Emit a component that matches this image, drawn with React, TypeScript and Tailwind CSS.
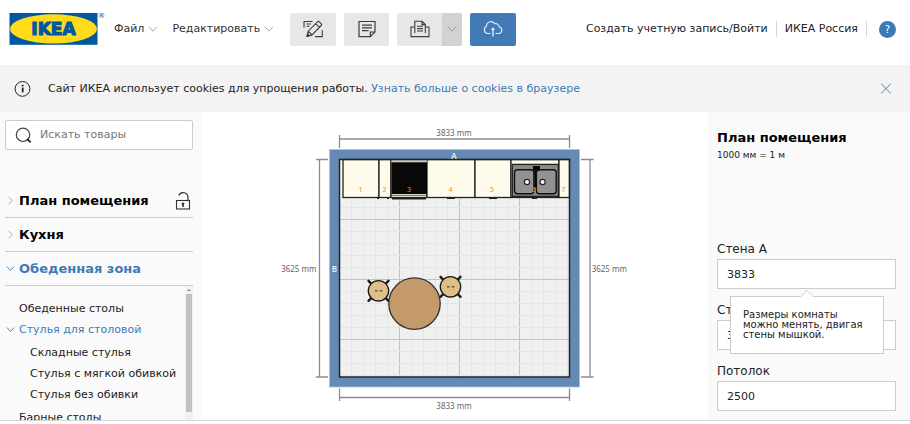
import React from 'react';

const mainMenu = ['Файл', 'Редактировать'];

const cabinets = [
  { id: 1, x: 343, width: 36, label: 360.5 },
  { id: 2, x: 379, width: 12, label: 384.5 },
  { id: 3, x: 391, width: 36, label: 409 },
  { id: 4, x: 427, width: 48, label: 450.5 },
  { id: 5, x: 475, width: 36, label: 492 },
  { id: 6, x: 511, width: 48, label: 534 },
  { id: 7, x: 559, width: 10.5, label: 563.5 },
];

const chairs = [
  { x: 378.5, y: 290.8 },
  { x: 450.5, y: 286.8 },
];

const gridX = Array.from({ length: 19 }, (_, i) => 351.5 + i * 12);
const gridY = Array.from({ length: 15 }, (_, i) => 207.5 + i * 12);

function Chevron({ className }: { className: string }) {
  return (
    <svg viewBox="0 0 10 10" className={className} fill="none" stroke="currentColor" aria-hidden="true">
      <path d="M1 2.8 L5 7.2 L9 2.8" />
    </svg>
  );
}

function Logo() {
  return (
    <svg viewBox="0 0 98 36" className="w-[98px] h-9" role="img" aria-label="IKEA">
      <rect x="0.5" y="2" width="88" height="31.8" fill="#0058a3" />
      <ellipse cx="44.5" cy="17.9" rx="43.5" ry="14.6" fill="#ffdb1c" />
      <text
        x="44.5"
        y="23.8"
        textAnchor="middle"
        fontFamily="DejaVu Sans"
        fontWeight="700"
        fontSize="17"
        fill="#0058a3"
        stroke="#0058a3"
        strokeWidth="1.2"
      >
        IKEA
      </text>
      <text x="89" y="6.5" fontFamily="DejaVu Sans" fontSize="7" fill="#0058a3">
        ®
      </text>
    </svg>
  );
}

function Header() {
  return (
    <header className="flex items-center h-[66px] pb-[7px] pl-[9px] pr-[14px] shrink-0 bg-white border-b border-[#f3f3f3]">
      <a href="#home" className="shrink-0">
        <Logo />
      </a>
      <nav className="flex items-center gap-[14px] ml-[7px]">
        {mainMenu.map((item) => (
          <button key={item} className="flex items-center gap-1 text-[11px] text-[#333]">
            {item}
            <Chevron className="w-[10px] h-[10px] text-[#aaa]" />
          </button>
        ))}
      </nav>
      <div className="flex items-center gap-2 ml-4">
        <button aria-label="Новый план" className="flex items-center justify-center w-[46px] h-[33px] rounded-xs bg-[#e7e7e7]">
          <svg viewBox="0 0 20 18" className="w-5 h-[18px]" fill="none" stroke="#3c3c3c" strokeWidth="1.1">
            <path d="M1 7.5 V1.5 H9.5 M3.5 4 H8 M3.5 6.2 H6.5" />
            <path d="M4 16.3 L5.2 11.2 L14.5 1.8 Q15.4 1 16.3 1.9 L18.3 3.9 Q19 4.7 18.2 5.5 L9 15 Z M5.2 11.2 L9 15 M12.6 3.6 L16.4 7.4" />
            <path d="M4 16.3 L4.6 13.8 L6.5 15.7 Z" fill="#3c3c3c" />
            <path d="M19.3 10 V16.6 H12" />
          </svg>
        </button>
        <button aria-label="Заметка" className="flex items-center justify-center w-[45px] h-[33px] rounded-xs bg-[#e7e7e7]">
          <svg viewBox="0 0 18 18" className="w-[18px] h-[18px]" fill="none" stroke="#3c3c3c" strokeWidth="1.2">
            <path d="M1 1.5 H17 V12 L12.3 16.6 H1 Z M17 12 H12.3 V16.6" />
            <path d="M4 5.2 H14 M4 7.9 H14 M4 10.6 H10.5" />
          </svg>
        </button>
        <div className="flex h-[33px] rounded-xs overflow-hidden bg-[#e7e7e7]">
          <button aria-label="Печать" className="flex items-center justify-center w-[45px]">
            <svg viewBox="0 0 20 18" className="w-5 h-[18px]" fill="none" stroke="#3c3c3c" strokeWidth="1.1">
              <path d="M4.5 7 H1 V16.6 H19 V7 H15.5" />
              <path d="M4.8 13.2 V1.3 H12 L15.3 4.6 V13.2" />
              <path d="M12 1.3 V4.6 H15.3 M7 6.2 H13 M7 8.6 H13 M7 11 H13" />
            </svg>
          </button>
          <button aria-label="Варианты печати" className="flex items-center justify-center w-5 bg-[#d2d2d2]">
            <Chevron className="w-[10px] h-[10px] text-[#999]" />
          </button>
        </div>
        <button aria-label="Сохранить" className="flex items-center justify-center w-[46px] h-[33px] rounded-xs bg-[#417ab4]">
          <svg viewBox="0 0 20 18" className="w-5 h-[18px]" fill="none" stroke="#e3ecf5" strokeWidth="1.1">
            <path d="M7.5 13.5 H4.8 A3.7 3.7 0 0 1 3.4 6.5 A4.6 4.6 0 0 1 11.8 3.7 A3.6 3.6 0 0 1 16.2 7 A3.3 3.3 0 0 1 15.8 13.5 H12.5" />
            <path d="M10 16.5 V8" strokeWidth="1.4" />
            <path d="M7.8 10 L10 7.2 L12.2 10 Z" fill="#e3ecf5" stroke="none" />
          </svg>
        </button>
      </div>
      <div className="flex items-center ml-auto text-[11px] text-[#222] whitespace-nowrap">
        <a href="#login" className="pr-2">
          Создать учетную запись/Войти
        </a>
        <a href="#russia" className="px-2 border-x border-[#d8d8d8]">
          ИКЕА Россия
        </a>
        <button
          aria-label="Помощь"
          className="flex items-center justify-center w-[17px] h-[17px] ml-3 rounded-full bg-[#3d79b5] text-white text-[10px]"
        >
          ?
        </button>
      </div>
    </header>
  );
}

function CookieBar() {
  return (
    <div className="flex items-center h-[46px] pl-[14px] pr-[18px] shrink-0 bg-[#f3f3f3] text-[11px] text-[#222]">
      <svg viewBox="0 0 17 17" className="w-[17px] h-[17px] mr-[17px]" fill="none" stroke="#222" aria-hidden="true">
        <circle cx="8.5" cy="7.9" r="7.4" />
        <path d="M8.7 6.6 V11.4" strokeWidth="1.8" />
        <path d="M8.7 3.8 V5.4" strokeWidth="1.8" />
      </svg>
      <p>
        Сайт ИКЕА использует cookies для упрощения работы.{' '}
        <a href="#cookies" className="text-[#3f7ab7]">
          Узнать больше о cookies в браузере
        </a>
      </p>
      <button aria-label="Закрыть" className="ml-auto text-[#4a82bb]">
        <svg viewBox="0 0 12 12" className="w-3 h-3" fill="none" stroke="currentColor">
          <path d="M1.2 0.8 L10.8 10.4 M10.8 0.8 L1.2 10.4" />
        </svg>
      </button>
    </div>
  );
}

function Sidebar() {
  return (
    <aside className="flex flex-col w-[201px] pt-2 pl-[5px] pr-2 shrink-0 bg-[#fafafa]">
      <label className="flex items-center h-[30px] px-[9px] gap-2 shrink-0 bg-white border border-[#ccc] rounded-xs">
        <svg viewBox="0 0 17 17" className="w-[17px] h-[17px] shrink-0" fill="none" stroke="#444" aria-hidden="true">
          <circle cx="8" cy="7.8" r="6.7" strokeWidth="1.2" />
          <path d="M12.2 12 L15.6 15.4" stroke="#222" strokeWidth="1.8" />
        </svg>
        <input
          type="search"
          aria-label="Искать товары"
          placeholder="Искать товары"
          className="w-full min-w-0 pt-px text-[11px] outline-none placeholder:text-[#777]"
        />
      </label>
      <div className="mt-[34px] text-[13px] font-bold text-black">
        <div className="flex items-center h-[34px] border-b border-[#ccc]">
          <button className="flex items-center gap-1 pl-px">
            <Chevron className="w-[9px] h-[9px] -rotate-90 text-[#aaa]" />
            План помещения
          </button>
          <button aria-label="Разблокировать" className="ml-auto mr-[2px]">
            <svg viewBox="0 0 16 18" className="w-4 h-[18px]" fill="none" stroke="#333">
              <rect x="1.5" y="8.5" width="13" height="8.5" strokeWidth="1.1" />
              <path d="M3.8 3.6 A4.8 4.8 0 0 1 13 5.2 V8.5" strokeWidth="1.2" />
              <path d="M8 11 V15" stroke="#111" strokeWidth="1.4" />
              <circle cx="8" cy="11.8" r="0.9" fill="#111" />
            </svg>
          </button>
        </div>
        <button className="flex items-center w-full h-[34px] gap-1 pl-px border-b border-[#ccc]">
          <Chevron className="w-[9px] h-[9px] -rotate-90 text-[#aaa]" />
          Кухня
        </button>
        <button className="flex items-center w-full h-[34px] gap-1 pl-px border-b border-[#ccc] text-[#3f7ab7]">
          <Chevron className="w-[9px] h-[9px]" />
          Обеденная зона
        </button>
      </div>
      <div className="flex flex-1 min-h-0">
        <ul className="flex-1 pt-3 overflow-hidden text-[11px] leading-[21px] text-[#222] whitespace-nowrap">
          <li className="pl-[14px]">
            <a href="#tables">Обеденные столы</a>
          </li>
          <li>
            <a href="#chairs" className="flex items-center gap-1 pl-px text-[#3f7ab7]">
              <Chevron className="w-[9px] h-[9px]" />
              Стулья для столовой
            </a>
            <ul className="py-[2px] pl-[25px]">
              <li>
                <a href="#folding">Складные стулья</a>
              </li>
              <li>
                <a href="#soft">Стулья с мягкой обивкой</a>
              </li>
              <li>
                <a href="#hard">Стулья без обивки</a>
              </li>
            </ul>
          </li>
          <li className="pl-[14px]">
            <a href="#bar">Барные столы</a>
          </li>
        </ul>
        <div className="flex flex-col w-2 px-px pb-2 bg-[#f1f1f1]">
          <svg viewBox="0 0 6 8" className="w-[6px] h-2" aria-hidden="true">
            <path d="M1 5 L3 3 L5 5 Z" fill="#888" />
          </svg>
          <div className="flex-1 bg-[#c1c1c1]" />
        </div>
      </div>
    </aside>
  );
}

function FloorPlan() {
  return (
    <svg viewBox="201 112 507 308" className="w-full h-full" role="img" aria-label="План кухни">
      {/* walls and floor */}
      <rect x="329.5" y="149.5" width="250" height="237.5" fill="#658bb5" stroke="#a9c1dc" strokeWidth="0.8" />
      <rect x="339.5" y="159.5" width="230" height="217.5" fill="#f0f0f0" />
      {gridX.map((x, i) => (
        <path key={x} d={`M${x} 198 V377`} stroke={i % 5 === 4 ? '#c4c4c4' : '#e5e5e5'} />
      ))}
      {gridY.map((y, i) => (
        <path key={y} d={`M340 ${y} H569`} stroke={i % 5 === 1 ? '#c4c4c4' : '#e5e5e5'} />
      ))}
      <rect x="339.5" y="159.5" width="230" height="38" fill="#fffbea" />

      {/* cabinets */}
      {cabinets.map((cabinet) => (
        <rect
          key={cabinet.id}
          x={cabinet.x}
          y="159.5"
          width={cabinet.width}
          height="38"
          fill="#fffbea"
          stroke="#222"
          strokeWidth="1.3"
        />
      ))}
      <rect x="391.5" y="160.2" width="35.5" height="2.3" fill="#cfc7b4" />
      <rect x="391.5" y="162.3" width="35.5" height="31.7" fill="#080808" />
      <path d="M391 195.3 H427" stroke="#333" strokeWidth="0.8" />
      <path d="M392 198.7 H426" stroke="#222" strokeWidth="1.8" />
      <path d="M447 198.3 H455 M489 198.3 H497 M377 198.3 H379 M387 198.3 H389 M532 198.3 H537" stroke="#222" strokeWidth="1.6" />

      {/* sink */}
      <rect x="512.3" y="164.4" width="46" height="32" fill="#8a8a8a" stroke="#222" strokeWidth="1.3" />
      <rect x="514.5" y="169.8" width="19.4" height="24" rx="3" fill="#929292" stroke="#111" strokeWidth="1.4" />
      <rect x="536.4" y="169.8" width="19.8" height="24" rx="3" fill="#929292" stroke="#111" strokeWidth="1.4" />
      <path d="M533 166 H540 V170.5 H533 Z" fill="#080808" />
      <path d="M535.2 169 V188" stroke="#080808" strokeWidth="1.8" />
      <circle cx="527" cy="182" r="2.6" fill="#fff" stroke="#222" strokeWidth="1.2" />
      <circle cx="542.6" cy="182" r="2.6" fill="#fff" stroke="#222" strokeWidth="1.2" />

      <rect x="339.5" y="159.5" width="230" height="217.5" fill="none" stroke="#1d2630" strokeWidth="1.5" />

      <g fontFamily="Noto Sans" fontSize="7" fill="#f28a1e" textAnchor="middle">
        {cabinets.map((cabinet) => (
          <text key={cabinet.id} x={cabinet.label} y="191.8">
            {cabinet.id}
          </text>
        ))}
      </g>

      {/* dining group */}
      {chairs.map((chair) => (
        <g key={chair.x} transform={`translate(${chair.x} ${chair.y})`} stroke="#1c1c1c">
          <path d="M-10 -10 L10 10 M10 -10 L-10 10" strokeWidth="2.4" strokeLinecap="round" />
          <circle r="10.2" fill="#dfc088" strokeWidth="1.3" />
          <path d="M-3.6 0 H-1 M1.2 0 H3.8" stroke="#6b5836" strokeWidth="1.4" />
        </g>
      ))}
      <circle cx="414.5" cy="303.6" r="25.7" fill="#c49a6a" stroke="#333" strokeWidth="1.3" />

      {/* dimension lines */}
      <path
        d="M339.5 139 H569.5 M339.5 135 V148 M569.5 135 V148 M339.5 397.5 H569.5 M339.5 388.5 V401 M569.5 388.5 V401 M319.5 159.5 V377 M316 159.5 H328 M316 377 H328 M590 159.5 V377 M581 159.5 H593.5 M581 377 H593.5"
        fill="none"
        stroke="#8c8c8c"
        strokeWidth="1.3"
      />
      <g fontFamily="Noto Sans" fontSize="8" fill="#666" textAnchor="middle">
        <text x="454" y="136">3833 mm</text>
        <text x="454" y="409">3833 mm</text>
        <text x="298.8" y="272.3">3625 mm</text>
        <text x="609.3" y="272.3">3625 mm</text>
      </g>
      <g fontFamily="Noto Sans" fontSize="8" fontWeight="600" fill="#e6eef7" textAnchor="middle">
        <text x="454" y="158.5">A</text>
        <text x="334.5" y="272.3">B</text>
      </g>
    </svg>
  );
}

function Field({ id, label, value }: { id: string; label: string; value: string }) {
  return (
    <div className="flex flex-col">
      <label htmlFor={id} className="text-xs leading-5">
        {label}
      </label>
      <input
        id={id}
        type="text"
        defaultValue={value}
        className="w-full h-[30px] px-[9px] bg-white border border-[#ccc] text-[11px] outline-none"
      />
    </div>
  );
}

function RoomPanel() {
  return (
    <aside className="w-[202px] pt-[17px] pl-[9px] pr-[14px] shrink-0 bg-[#fafafa] text-[#222]">
      <h2 className="text-[13px] leading-[18px] font-bold text-black">План помещения</h2>
      <p className="text-[9px] leading-4">1000 мм = 1 м</p>
      <div className="relative flex flex-col gap-[11px] mt-[76px]">
        <Field id="wall-a" label="Стена A" value="3833" />
        <Field id="wall-b" label="Стена B" value="3625" />
        <Field id="ceiling" label="Потолок" value="2500" />
        <div
          role="tooltip"
          className="absolute top-[57px] left-[13px] right-3 py-[13px] px-3 bg-white border border-[#ccc] text-[10px] leading-[10px]"
        >
          <svg viewBox="0 0 14 8" className="absolute -top-[7px] left-[69px] w-[14px] h-2" aria-hidden="true">
            <path d="M0 7 L7 0.5 L14 7 V8 H0 Z" fill="#fff" />
            <path d="M0.5 6.8 L7 0.5 L13.5 6.8" fill="none" stroke="#ccc" />
          </svg>
          Размеры комнаты можно менять, двигая стены мышкой.
        </div>
      </div>
    </aside>
  );
}

export default function App() {
  return (
    <div className="flex flex-col h-screen overflow-hidden bg-white font-['DejaVu_Sans',sans-serif]">
      <Header />
      <CookieBar />
      <main className="flex flex-1 min-h-0 overflow-hidden">
        <Sidebar />
        <section className="flex-1 min-w-0">
          <FloorPlan />
        </section>
        <RoomPanel />
      </main>
      <footer className="h-1 shrink-0 bg-white border-t border-[#d5d5d5]" />
    </div>
  );
}
